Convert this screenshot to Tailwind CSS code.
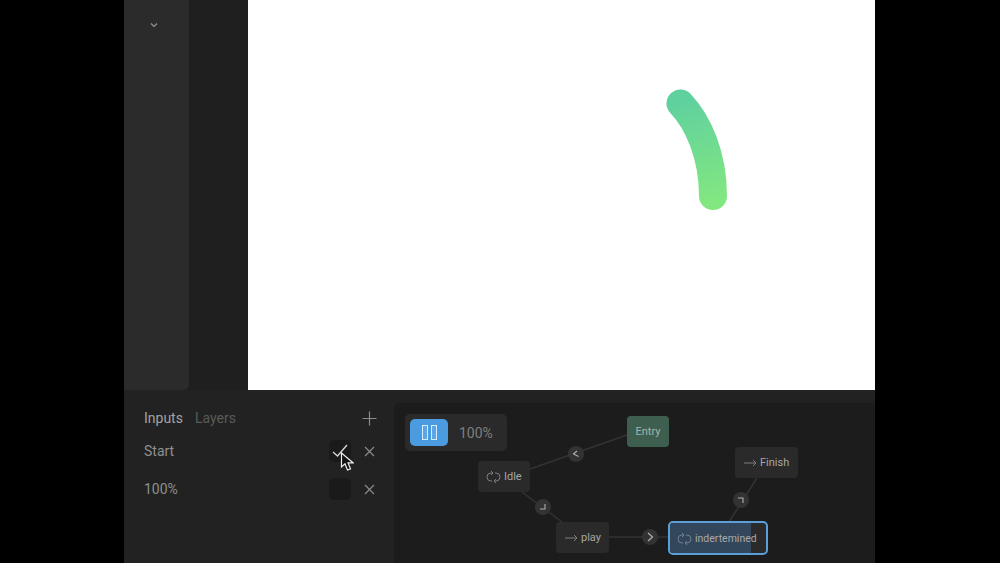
<!DOCTYPE html>
<html lang="en">
<head>
  <meta charset="UTF-8" />
  <title>State machine</title>
  <script src="https://cdn.jsdelivr.net/npm/@tailwindcss/browser@4"></script>
</head>
<body class="bg-black font-['Roboto',sans-serif] overflow-hidden">
  <div class="relative w-[1000px] h-[563px] bg-black overflow-hidden">
    <div class="ml-[124px] w-[751px] h-[563px] flex flex-col bg-[#1f1f1f]">

      <!-- top: toolbar + artboard -->
      <div class="h-[390px] flex shrink-0">
        <aside class="w-[65px] bg-[#2b2b2b] rounded-br-[5px] flex pl-[26px] pt-[22px]">
          <svg class="w-[8px] h-[6px]" viewBox="0 0 8 6" fill="none" stroke="#969696" stroke-width="1.2"><path d="M1 1.500 4 4.500 7 1.500"/></svg>
        </aside>
        <div class="w-[59px] bg-[#1f1f1f]"></div>
        <main class="relative flex-1 bg-white">
          <svg class="absolute left-0 top-0 w-[627px] h-[390px]" viewBox="0 0 627 390" fill="none">
            <defs>
              <linearGradient id="arc" gradientUnits="userSpaceOnUse" x1="432" y1="100" x2="465" y2="200">
                <stop offset="0" stop-color="#5fd19f"/>
                <stop offset="1" stop-color="#82e681"/>
              </linearGradient>
            </defs>
            <path d="M432.500 103.500C450 122 465 155 465 196" stroke="url(#arc)" stroke-width="28" stroke-linecap="round"/>
          </svg>
        </main>
      </div>

      <!-- bottom panel -->
      <div class="flex-1 flex bg-[#222222]">
        <section class="w-[270px] shrink-0 pl-[20px] pr-[19px] pt-[19px]">
          <div class="flex items-center h-[18px] text-[14px]">
            <span class="text-[#a3a3a3]">Inputs</span>
            <span class="ml-[12px] text-[#5a5a5a]">Layers</span>
            <svg class="ml-auto mr-[-2px] w-[15px] h-[15px]" viewBox="0 0 15 15" stroke="#8a8a8a" stroke-width="1.2"><path d="M7.500 0.500v14M0.500 7.500h14"/></svg>
          </div>
          <div class="flex items-center h-[22px] mt-[13px] text-[14px] text-[#8f8f8f]">
            <span>Start</span>
            <div class="ml-auto w-[22px] h-[22px] rounded-[5px] bg-[#1a1a1a] flex items-center justify-center">
              <svg class="w-[16px] h-[14px]" viewBox="0 0 16 14" fill="none" stroke="#d8d8d8" stroke-width="1.300"><path d="M1 8 5.500 12 15 1"/></svg>
            </div>
            <svg class="ml-[13px] w-[11px] h-[11px]" viewBox="0 0 11 11" stroke="#8a8a8a" stroke-width="1.200"><path d="M1 1l9 9M10 1l-9 9"/></svg>
          </div>
          <div class="flex items-center h-[22px] mt-[16px] text-[14px] text-[#8f8f8f]">
            <span>100%</span>
            <div class="ml-auto w-[22px] h-[22px] rounded-[5px] bg-[#1a1a1a]"></div>
            <svg class="ml-[13px] w-[11px] h-[11px]" viewBox="0 0 11 11" stroke="#8a8a8a" stroke-width="1.200"><path d="M1 1l9 9M10 1l-9 9"/></svg>
          </div>
        </section>
        <section class="flex-1 mt-[13px] bg-[#1c1c1d] rounded-tl-[5px]"></section>
      </div>
    </div>

    <!-- state machine graph: nodes sit on a free canvas -->
    <svg class="absolute left-0 top-0 w-[1000px] h-[563px]" viewBox="0 0 1000 563" fill="none" stroke="#333333" stroke-width="1.500">
      <path d="M530 469 627 435"/>
      <path d="M522 492 562 522"/>
      <path d="M609 537H669"/>
      <path d="M757 478 729 522"/>
    </svg>

    <div class="absolute left-[405px] top-[414px] w-[102px] h-[37px] rounded-[5px] bg-[#2a2a2a] flex items-center pl-[5px]">
      <div class="w-[38px] h-[27px] rounded-[5px] bg-[#4a9be0] flex items-center justify-center gap-[3px]">
        <span class="w-[6px] h-[15px] border border-[#d4ecff] bg-[#5aa6e6]"></span>
        <span class="w-[6px] h-[15px] border border-[#d4ecff] bg-[#5aa6e6]"></span>
      </div>
      <span class="ml-[11px] pt-px text-[14px] text-[#7f7f7f]">100%</span>
    </div>

    <div class="absolute left-[627px] top-[416px] w-[42px] h-[31px] pt-px rounded-[4px] bg-[#3e5f50] flex items-center justify-center text-[11px] text-[#a3b5ac]">Entry</div>

    <div class="absolute left-[478px] top-[461px] w-[52px] h-[31px] pt-px rounded-[4px] bg-[#2a2a2a] flex items-center pl-[8px] gap-[3px] text-[11px] text-[#a6a6a6]">
      <svg class="w-[15px] h-[14px]" viewBox="0 0 15 14" fill="none" stroke="#7c7c7c" stroke-width="1"><path d="M6.500 3H5a4 4 0 0 0 0 8h1M8.500 11H10a4 4 0 0 0 0-8H9M5 1l2 2-2 2M10 9l-2 2 2 2"/></svg>
      <span>Idle</span>
    </div>

    <div class="absolute left-[556px] top-[522px] w-[53px] h-[31px] pt-px rounded-[4px] bg-[#2a2a2a] flex items-center pl-[9px] gap-[3px] text-[11px] text-[#a6a6a6]">
      <svg class="w-[13px] h-[8px]" viewBox="0 0 13 8" fill="none" stroke="#7c7c7c" stroke-width="1"><path d="M0 4h12M9 1l3 3-3 3"/></svg>
      <span>play</span>
    </div>

    <div class="absolute left-[735px] top-[447px] w-[63px] h-[31px] pt-px rounded-[4px] bg-[#2a2a2a] flex items-center pl-[9px] gap-[3px] text-[11px] text-[#a6a6a6]">
      <svg class="w-[13px] h-[8px]" viewBox="0 0 13 8" fill="none" stroke="#7c7c7c" stroke-width="1"><path d="M0 4h12M9 1l3 3-3 3"/></svg>
      <span>Finish</span>
    </div>

    <div class="absolute left-[668px] top-[521px] w-[100px] h-[34px] rounded-[5px] border-[2px] border-[#5a9fd8] bg-[#2a2a2a] overflow-hidden">
      <div class="h-full w-[81px] pt-px bg-[#32475c] flex items-center pl-[7px] gap-[3px] text-[10.5px] text-[#a9a9a9] whitespace-nowrap">
        <svg class="w-[15px] h-[14px] shrink-0" viewBox="0 0 15 14" fill="none" stroke="#6f7f8f" stroke-width="1"><path d="M6.500 3H5a4 4 0 0 0 0 8h1M8.500 11H10a4 4 0 0 0 0-8H9M5 1l2 2-2 2M10 9l-2 2 2 2"/></svg>
        <span>indertemined</span>
      </div>
    </div>

    <!-- transition dots -->
    <div class="absolute left-[568px] top-[446px] w-[16px] h-[16px] rounded-full bg-[#333333] flex items-center justify-center">
      <svg class="w-[8px] h-[8px]" viewBox="0 0 8 8" fill="none" stroke="#b0b0b0" stroke-width="1.100"><path d="M5 1 1.500 4 6.500 6.500"/></svg>
    </div>
    <div class="absolute left-[535px] top-[499px] w-[16px] h-[16px] rounded-full bg-[#333333] flex items-center justify-center">
      <svg class="w-[8px] h-[8px]" viewBox="0 0 8 8" fill="none" stroke="#b0b0b0" stroke-width="1.100"><path d="M6 1V6H1"/></svg>
    </div>
    <div class="absolute left-[642px] top-[529px] w-[16px] h-[16px] rounded-full bg-[#333333] flex items-center justify-center">
      <svg class="w-[8px] h-[10px]" viewBox="0 0 8 10" fill="none" stroke="#b0b0b0" stroke-width="1.200"><path d="M2 1 6.500 5 2 9"/></svg>
    </div>
    <div class="absolute left-[733px] top-[492px] w-[16px] h-[16px] rounded-full bg-[#333333] flex items-center justify-center">
      <svg class="w-[8px] h-[8px]" viewBox="0 0 8 8" fill="none" stroke="#b0b0b0" stroke-width="1.100"><path d="M1 2H6V7"/></svg>
    </div>

    <!-- mouse cursor -->
    <svg class="absolute left-[340px] top-[452px] w-[14px] h-[20px]" viewBox="0 0 14 20" fill="#111111" stroke="#ececec" stroke-width="1.200"><path d="M1.500 1V15L5 11.800 7.500 18 10.500 16.800 8 10.800H13Z"/></svg>
  </div>
</body>
</html>
